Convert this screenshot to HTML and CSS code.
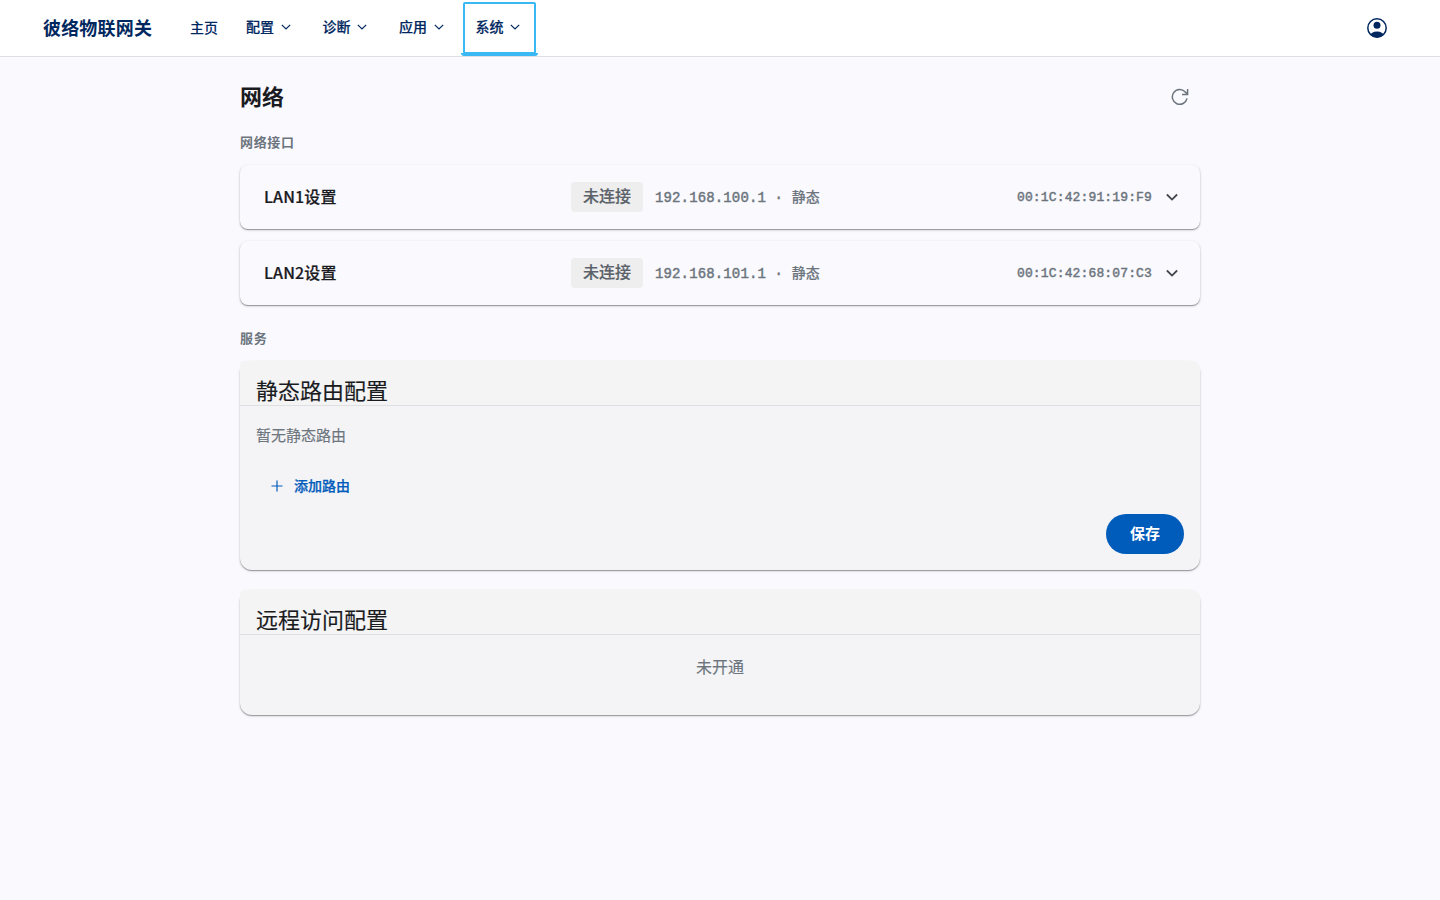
FILE: index.html
```html
<!DOCTYPE html>
<html lang="zh-CN">
<head>
<meta charset="utf-8">
<title>网络</title>
<link rel="stylesheet" href="styles.css">
</head>
<body>
<header class="topbar">
  <div class="brand">彼络物联网关</div>
  <nav class="nav">
    <a class="nav-item home">主页</a>
    <a class="nav-item"><span class="label">配置</span><svg class="caret" viewBox="0 0 10 6"><path d="M.8.8 5 5 9.2.8"/></svg></a>
    <a class="nav-item"><span class="label">诊断</span><svg class="caret" viewBox="0 0 10 6"><path d="M.8.8 5 5 9.2.8"/></svg></a>
    <a class="nav-item"><span class="label">应用</span><svg class="caret" viewBox="0 0 10 6"><path d="M.8.8 5 5 9.2.8"/></svg></a>
    <a class="nav-item active"><span class="label">系统</span><svg class="caret" viewBox="0 0 10 6"><path d="M.8.8 5 5 9.2.8"/></svg></a>
  </nav>
  <svg class="account" viewBox="0 0 20 20"><defs><clipPath id="ring"><circle cx="10" cy="10" r="9.5"/></clipPath></defs><circle cx="10" cy="10" r="9.2" fill="none" stroke="currentColor" stroke-width="1.5"/><circle cx="10" cy="7.2" r="3.5" fill="currentColor"/><ellipse cx="10" cy="18.2" rx="7.3" ry="4.6" fill="currentColor" clip-path="url(#ring)"/></svg>
</header>
<main class="page">
  <div class="page-head">
    <h1 class="page-title">网络</h1>
    <svg class="refresh" viewBox="0 0 18 18"><path d="M16 10.4A7.4 7.4 0 1 1 14.2 3.9L16.6 6.3M16.6 1V6.4H11"/></svg>
  </div>
  <h2 class="section">网络接口</h2>
  <div class="iface">
    <div class="iface-name">LAN1设置</div>
    <span class="chip">未连接</span>
    <span class="addr">192.168.100.1 · <span class="mode">静态</span></span>
    <span class="mac">00:1C:42:91:19:F9</span>
    <svg class="expand" viewBox="0 0 12 8"><path d="M.9 1.5 6 6.6l5.1-5.1"/></svg>
  </div>
  <div class="iface">
    <div class="iface-name">LAN2设置</div>
    <span class="chip">未连接</span>
    <span class="addr">192.168.101.1 · <span class="mode">静态</span></span>
    <span class="mac">00:1C:42:68:07:C3</span>
    <svg class="expand" viewBox="0 0 12 8"><path d="M.9 1.5 6 6.6l5.1-5.1"/></svg>
  </div>
  <h2 class="section services">服务</h2>
  <section class="card">
    <h3 class="card-title">静态路由配置</h3>
    <div class="card-body">
      <p class="empty">暂无静态路由</p>
      <a class="add"><svg class="plus" viewBox="0 0 12 12"><path d="M6 .5v11M.5 6h11"/></svg><span class="add-label">添加路由</span></a>
      <div class="actions"><button class="save">保存</button></div>
    </div>
  </section>
  <section class="card remote">
    <h3 class="card-title">远程访问配置</h3>
    <p class="unavailable">未开通</p>
  </section>
</main>
</body>
</html>
```

FILE: styles.css
```css
* { box-sizing: border-box; }
body {
  margin: 0;
  min-height: 900px;
  background: #faf9fe;
  color: #1a1b1f;
  font-family: "Noto Sans CJK SC", sans-serif;
}
h1, h2, h3, p { margin: 0; }
svg { display: block; flex: none; }
path { fill: none; stroke: currentColor; }
.topbar {
  display: flex;
  align-items: center;
  height: 57px;
  padding: 0 53px 0 43px;
  background: #fff;
  border-bottom: 1px solid #dedfe1;
  color: #00285f;
}
.brand { padding-bottom: 2px; font-size: 18px; line-height: 26px; font-weight: 700; letter-spacing: .18px; }
.nav { display: flex; gap: 3.5px; margin-left: 26px; height: 54px; align-self: flex-start; padding-top: 2px; }
.nav-item {
  display: flex;
  align-items: center;
  gap: 6.5px;
  width: 73px;
  height: 52px;
  padding: 0 0 2px 12.5px;
  font-size: 14px;
  line-height: 20px;
  font-weight: 500;
  -webkit-text-stroke: .2px currentColor;
  border-radius: 2px;
}
.label { padding-bottom: 2px; }
.home { width: 52px; padding: 0 0 2px 12px; -webkit-text-stroke: 0; }
.active {
  position: relative;
  padding: 0 0 2px 10.5px;
  border: 2px solid #39b8f4;
}
.active::after {
  content: "";
  position: absolute;
  left: -4px;
  right: -4px;
  bottom: -4px;
  height: 3px;
  border-radius: 0 0 3px 3px;
  background: #39b8f4;
}
.caret { width: 10px; height: 6px; stroke-width: 1.2; }
.account { width: 20px; height: 20px; margin-left: auto; overflow: visible; }
.page { width: 960px; margin: 0 auto; padding-top: 20px; }
.page-head { display: flex; align-items: center; justify-content: space-between; height: 40px; padding-right: 11px; }
.page-title { padding-bottom: 4px; font-size: 22px; line-height: 30px; font-weight: 700; }
.refresh { width: 18px; height: 18px; color: #6c757d; stroke-width: 1.5; }
.section {
  margin: 15px 0 13px;
  font-size: 13px;
  line-height: 20px;
  font-weight: 700;
  letter-spacing: .65px;
  color: #6c757d;
}
.iface {
  display: flex;
  align-items: center;
  height: 64px;
  margin-bottom: 12px;
  padding: 0 22px 0 24px;
  border-radius: 8px;
  background: #faf9fe;
  box-shadow: 0 1px 1px rgba(0,0,0,.32), 0 1px 3px rgba(0,0,0,.17);
}
.iface-name { width: 307px; padding-bottom: 2px; font-size: 16px; font-weight: 500; letter-spacing: .15px; -webkit-text-stroke: .2px currentColor; }
.chip {
  width: 72px;
  height: 30px;
  border-radius: 4px;
  background: #eeeeef;
  color: #5b6269;
  font-size: 16px;
  line-height: 27px;
  font-weight: 500;
  text-align: center;
  -webkit-text-stroke: .2px currentColor;
}
.addr, .mac {
  padding-top: 2px;
  font-family: "Liberation Mono", "Noto Sans CJK SC", monospace;
  font-weight: 500;
  letter-spacing: .14px;
  color: #6c757d;
  -webkit-text-stroke: .45px #6c757d;
}
.mode { -webkit-text-stroke: .15px #6c757d; }
.addr { margin-left: 12px; font-size: 14px; line-height: 20px; }
.mac { margin-left: auto; font-size: 13px; line-height: 20px; }
.expand { width: 12px; height: 8px; margin-left: 14px; color: #43474e; stroke-width: 1.8; }
.services { margin-top: 23px; }
.card {
  height: 209px;
  margin-bottom: 20px;
  border-radius: 12px;
  background: #f4f3f6;
  box-shadow: 0 1px 1px rgba(0,0,0,.32), 0 1px 3px rgba(0,0,0,.16);
}
.card-title {
  height: 45px;
  padding: 14px 16px 0;
  border-bottom: 1px solid #dedfe1;
  border-radius: 4px 8px 0 0;
  background: #f4f4f4;
  font-size: 22px;
  line-height: 28px;
  font-weight: 400;
  -webkit-text-stroke: .15px currentColor;
}
.card-body { padding: 15px 16px 16px; }
.empty { color: #6c757d; font-size: 15px; line-height: 28px; -webkit-text-stroke: .15px currentColor; }
.add {
  display: flex;
  align-items: center;
  gap: 11px;
  height: 40px;
  margin-top: 17px;
  padding-left: 15px;
  color: #005cbb;
  font-size: 14px;
  line-height: 20px;
  font-weight: 500;
  -webkit-text-stroke: .25px currentColor;
}
.add-label { padding-bottom: 2px; }
.plus { width: 12px; height: 12px; stroke-width: 1.2; }
.actions { display: flex; justify-content: flex-end; margin-top: 8px; }
.save {
  width: 78px;
  height: 40px;
  padding: 0 0 2px;
  border: 0;
  border-radius: 20px;
  background: #005cbb;
  color: #fff;
  font: 700 15px/38px "Noto Sans CJK SC", sans-serif;
}
.remote { height: 125px; }
.unavailable { padding-top: 19px; color: #6c757d; font-size: 16px; line-height: 24px; text-align: center; -webkit-text-stroke: .15px currentColor; }
```
